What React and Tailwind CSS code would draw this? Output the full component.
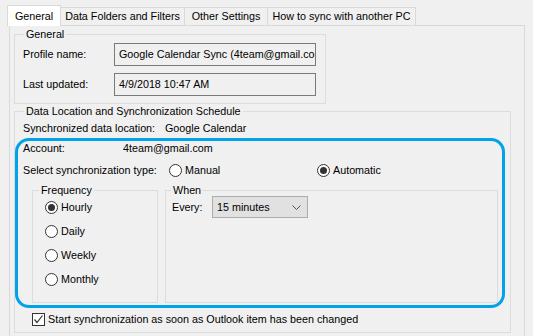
import React from "react";

function Radio({ checked, label, className = "" }) {
  return (
    <div className={`flex items-center ${className}`}>
      <span className="w-[13px] h-[13px] rounded-full border border-[#333333] bg-white flex items-center justify-center shrink-0">
        {checked && <span className="w-[7px] h-[7px] rounded-full bg-[#333333]" />}
      </span>
      <span className="ml-[3px]">{label}</span>
    </div>
  );
}

function GroupBox({ label, labelLeft, className = "", children }) {
  return (
    <div className={`relative border border-[#dcdcdc] ${className}`}>
      <span className={`absolute -top-[8px] ${labelLeft} px-[2px] bg-[#f0f0f0] leading-[14px]`}>
        {label}
      </span>
      {children}
    </div>
  );
}

export default function App() {
  return (
    <div
      className="w-[533px] h-[336px] overflow-hidden bg-[#f0f0f0] text-black text-[10.75px] leading-none"
      style={{ fontFamily: '"Liberation Sans", Arial, sans-serif' }}
    >
      {/* Tabs */}
      <div className="flex items-end h-[25px] pl-[7px]">
        <div className="relative z-10 -mb-px h-[21px] w-[54px] bg-white border border-b-0 border-[#d9d9d9] flex items-center justify-center">
          General
        </div>
        <div className="h-[18px] w-[124px] border-t border-r border-[#d9d9d9] flex items-center justify-center">
          Data Folders and Filters
        </div>
        <div className="h-[18px] w-[83px] border-t border-r border-[#d9d9d9] flex items-center justify-center">
          Other Settings
        </div>
        <div className="h-[18px] w-[148px] border-t border-r border-[#d9d9d9] flex items-center justify-center">
          How to sync with another PC
        </div>
      </div>

      {/* Tab page */}
      <div className="ml-[9px] w-[516px] h-[330px] border border-[#d9d9d9] pl-[4px]">
        {/* General */}
        <GroupBox label="General" labelLeft="left-[9px]" className="mt-[8px] w-[312px] h-[70px] pt-[8px] pl-[8px]">
          <div className="flex items-center h-[23px]">
            <span className="w-[91px]">Profile name:</span>
            <div className="w-[202px] h-[23px] border border-[#7a7a7a] bg-[#f0f0f0] flex items-center pl-[4px] overflow-hidden whitespace-nowrap">
              Google Calendar Sync (4team@gmail.com)
            </div>
          </div>
          <div className="flex items-center h-[23px] mt-[7px]">
            <span className="w-[91px]">Last updated:</span>
            <div className="w-[202px] h-[23px] border border-[#7a7a7a] bg-[#f0f0f0] flex items-center pl-[4px]">
              4/9/2018 10:47 AM
            </div>
          </div>
        </GroupBox>

        {/* Data Location and Synchronization Schedule */}
        <GroupBox
          label="Data Location and Synchronization Schedule"
          labelLeft="left-[9px]"
          className="mt-[7px] w-[497px] h-[222px]"
        >
          <div className="flex items-center h-[16px] mt-[8px] pl-[8px]">
            <span className="w-[142px]">Synchronized data location:</span>
            <span>Google Calendar</span>
          </div>

          {/* highlight */}
          <div className="mt-[2px] w-[490px] border-[3px] border-[#00a2e8] rounded-[14px] pb-[2px]">
            <div className="flex items-center h-[14px] pl-[5px]">
              <span className="w-[100px]">Account:</span>
              <span>4team@gmail.com</span>
            </div>
            <div className="flex items-center h-[14px] mt-[8px] pl-[5px]">
              <span className="w-[146px]">Select synchronization type:</span>
              <Radio label="Manual" className="w-[148px]" />
              <Radio checked label="Automatic" />
            </div>
            <div className="flex mt-[13px] pl-[14px]">
              <GroupBox label="Frequency" labelLeft="left-[6px]" className="w-[126px] h-[113px] pt-[4px] pl-[12px]">
                <Radio checked label="Hourly" className="h-[24px]" />
                <Radio label="Daily" className="h-[24px]" />
                <Radio label="Weekly" className="h-[24px]" />
                <Radio label="Monthly" className="h-[24px]" />
              </GroupBox>
              <GroupBox label="When" labelLeft="left-[5px]" className="ml-[7px] w-[333px] h-[113px] pt-[5px] pl-[6px]">
                <div className="flex items-center h-[22px]">
                  <span className="w-[40px]">Every:</span>
                  <div className="w-[96px] h-[22px] bg-[#e1e1e1] border border-[#adadad] flex items-center justify-between pl-[4px] pr-[6px]">
                    <span>15 minutes</span>
                    <svg width="9" height="5" viewBox="0 0 9 5" fill="none">
                      <path d="M0.5 0.5 L4.5 4.5 L8.5 0.5" stroke="#555555" strokeWidth="1" />
                    </svg>
                  </div>
                </div>
              </GroupBox>
            </div>
          </div>

          <div className="flex items-center h-[13px] mt-[5px] pl-[17px]">
            <span className="w-[13px] h-[13px] border border-[#333333] bg-white flex items-center justify-center shrink-0">
              <svg width="11" height="11" viewBox="0 0 11 11" fill="none">
                <path d="M1.5 5.5 L4 8.5 L9.5 1.5" stroke="#333333" strokeWidth="1.2" />
              </svg>
            </span>
            <span className="ml-[3px]">Start synchronization as soon as Outlook item has been changed</span>
          </div>
        </GroupBox>
      </div>
    </div>
  );
}
